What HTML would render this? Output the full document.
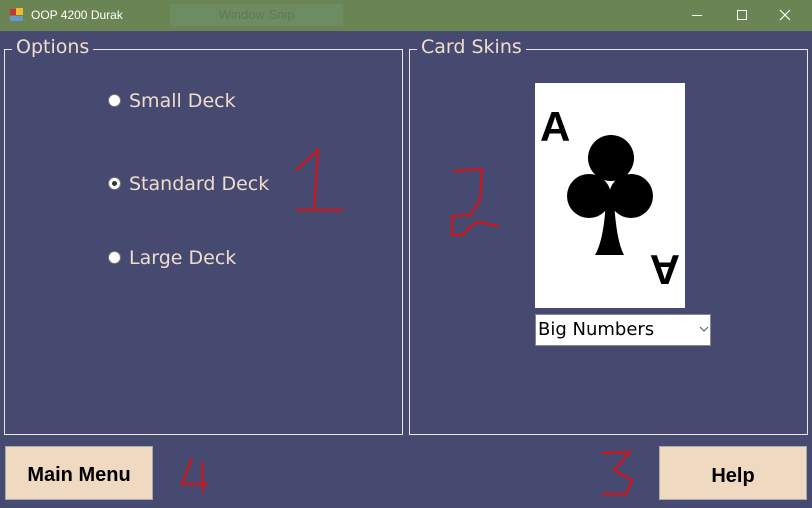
<!DOCTYPE html>
<html><head><style>
body{margin:0;width:812px;height:508px;background:#474a70;position:relative;overflow:hidden;font-family:"Segoe UI","DejaVu Sans","Liberation Sans",sans-serif}
.tb{position:absolute;left:0;top:0;width:812px;height:31px;background:#6a8454}
.t{position:absolute;color:#f0dccc;font-size:19px}
.grp{position:absolute;border:1px solid #e8e8e8}
.lg{position:absolute;top:-14px;left:7px;background:#474a70;padding:0 4px;color:#f0dccc;font-size:19px}
.rd{position:absolute;width:11px;height:11px;border-radius:50%;background:#fff;border:1px solid #777}
.btn{position:absolute;background:#f0d9c1;border:1px solid #aaa;font-weight:bold;font-size:20px;text-align:center;color:#000;font-family:"Liberation Sans",sans-serif}
</style></head><body>
<div class="tb">
<div style="position:absolute;left:10px;top:9px;width:6px;height:6px;background:#c33"></div>
<div style="position:absolute;left:16px;top:8px;width:7px;height:7px;background:#eb3"></div>
<div style="position:absolute;left:10px;top:16px;width:13px;height:5px;background:#69c"></div>
<div style="position:absolute;left:31px;top:8px;color:#fff;font-size:12px;font-family:'Liberation Sans',sans-serif">OOP 4200 Durak</div>
<div style="position:absolute;left:170px;top:4px;width:173px;height:22px;background:#6e8c62;color:#5f7a55;font-size:13px;text-align:center;line-height:22px;font-family:'Liberation Sans',sans-serif">Window Snip</div>
<div style="position:absolute;left:692px;top:15px;width:10px;height:1px;background:#fff"></div>
<div style="position:absolute;left:737px;top:10px;width:8px;height:8px;border:1px solid #fff"></div>
<svg style="position:absolute;left:779px;top:9px" width="12" height="12"><path d="M1 1L11 11M11 1L1 11" stroke="#fff" stroke-width="1.2"/></svg>
</div>
<div class="grp" style="left:4px;top:49px;width:397px;height:384px"><div class="lg">Options</div></div>
<div class="grp" style="left:409px;top:49px;width:397px;height:384px"><div class="lg">Card Skins</div></div>
<div class="rd" style="left:108px;top:94px"></div><div class="t" style="left:129px;top:90px">Small Deck</div>
<div class="rd" style="left:108px;top:177px"></div><div style="position:absolute;left:112px;top:181px;width:5px;height:5px;border-radius:50%;background:#333"></div><div class="t" style="left:129px;top:173px">Standard Deck</div>
<div class="rd" style="left:108px;top:251px"></div><div class="t" style="left:129px;top:247px">Large Deck</div>
<svg style="position:absolute;left:0;top:0" width="812" height="508">
<g fill="none" stroke="#e01010" stroke-width="2">
<path d="M296 170 L318 150 L314 210 M296 210 L343 210"/>
<path d="M453 171 L482 169 L480 200 L470 215 L452 216 L452 235 L462 235 L472 225 L478 222 L499 226"/>
<path d="M192 458 L182 484 L208 484 M202 462 L203 493"/>
<path d="M602 453 L630 452 L614 470 L632 480 L626 494 L602 494"/>
</g>
<rect x="535" y="83" width="150" height="225" fill="#fff"/>
<text x="540" y="141" font-family="Liberation Sans" font-weight="bold" font-size="42">A</text>
<text x="540" y="141" font-family="Liberation Sans" font-weight="bold" font-size="42" transform="rotate(180 610 198)">A</text>
<circle cx="611" cy="158" r="23"/><circle cx="589" cy="196" r="22"/><circle cx="631" cy="196" r="22"/>
<path d="M606 200 L614 200 Q616 240 624 255 L595 255 Q604 240 606 200Z"/>
<rect x="535.5" y="314.5" width="175" height="31" fill="#fff" stroke="#888"/>
<path d="M700 327 L704 331 L708 327" fill="none" stroke="#555"/>
</svg>
<div style="position:absolute;left:538px;top:319px;font-size:18px;color:#000">Big Numbers</div>
<div class="btn" style="left:5px;top:446px;width:146px;height:52px;line-height:56px">Main Menu</div>
<div class="btn" style="left:659px;top:446px;width:146px;height:52px;line-height:58px">Help</div>
</body></html>
